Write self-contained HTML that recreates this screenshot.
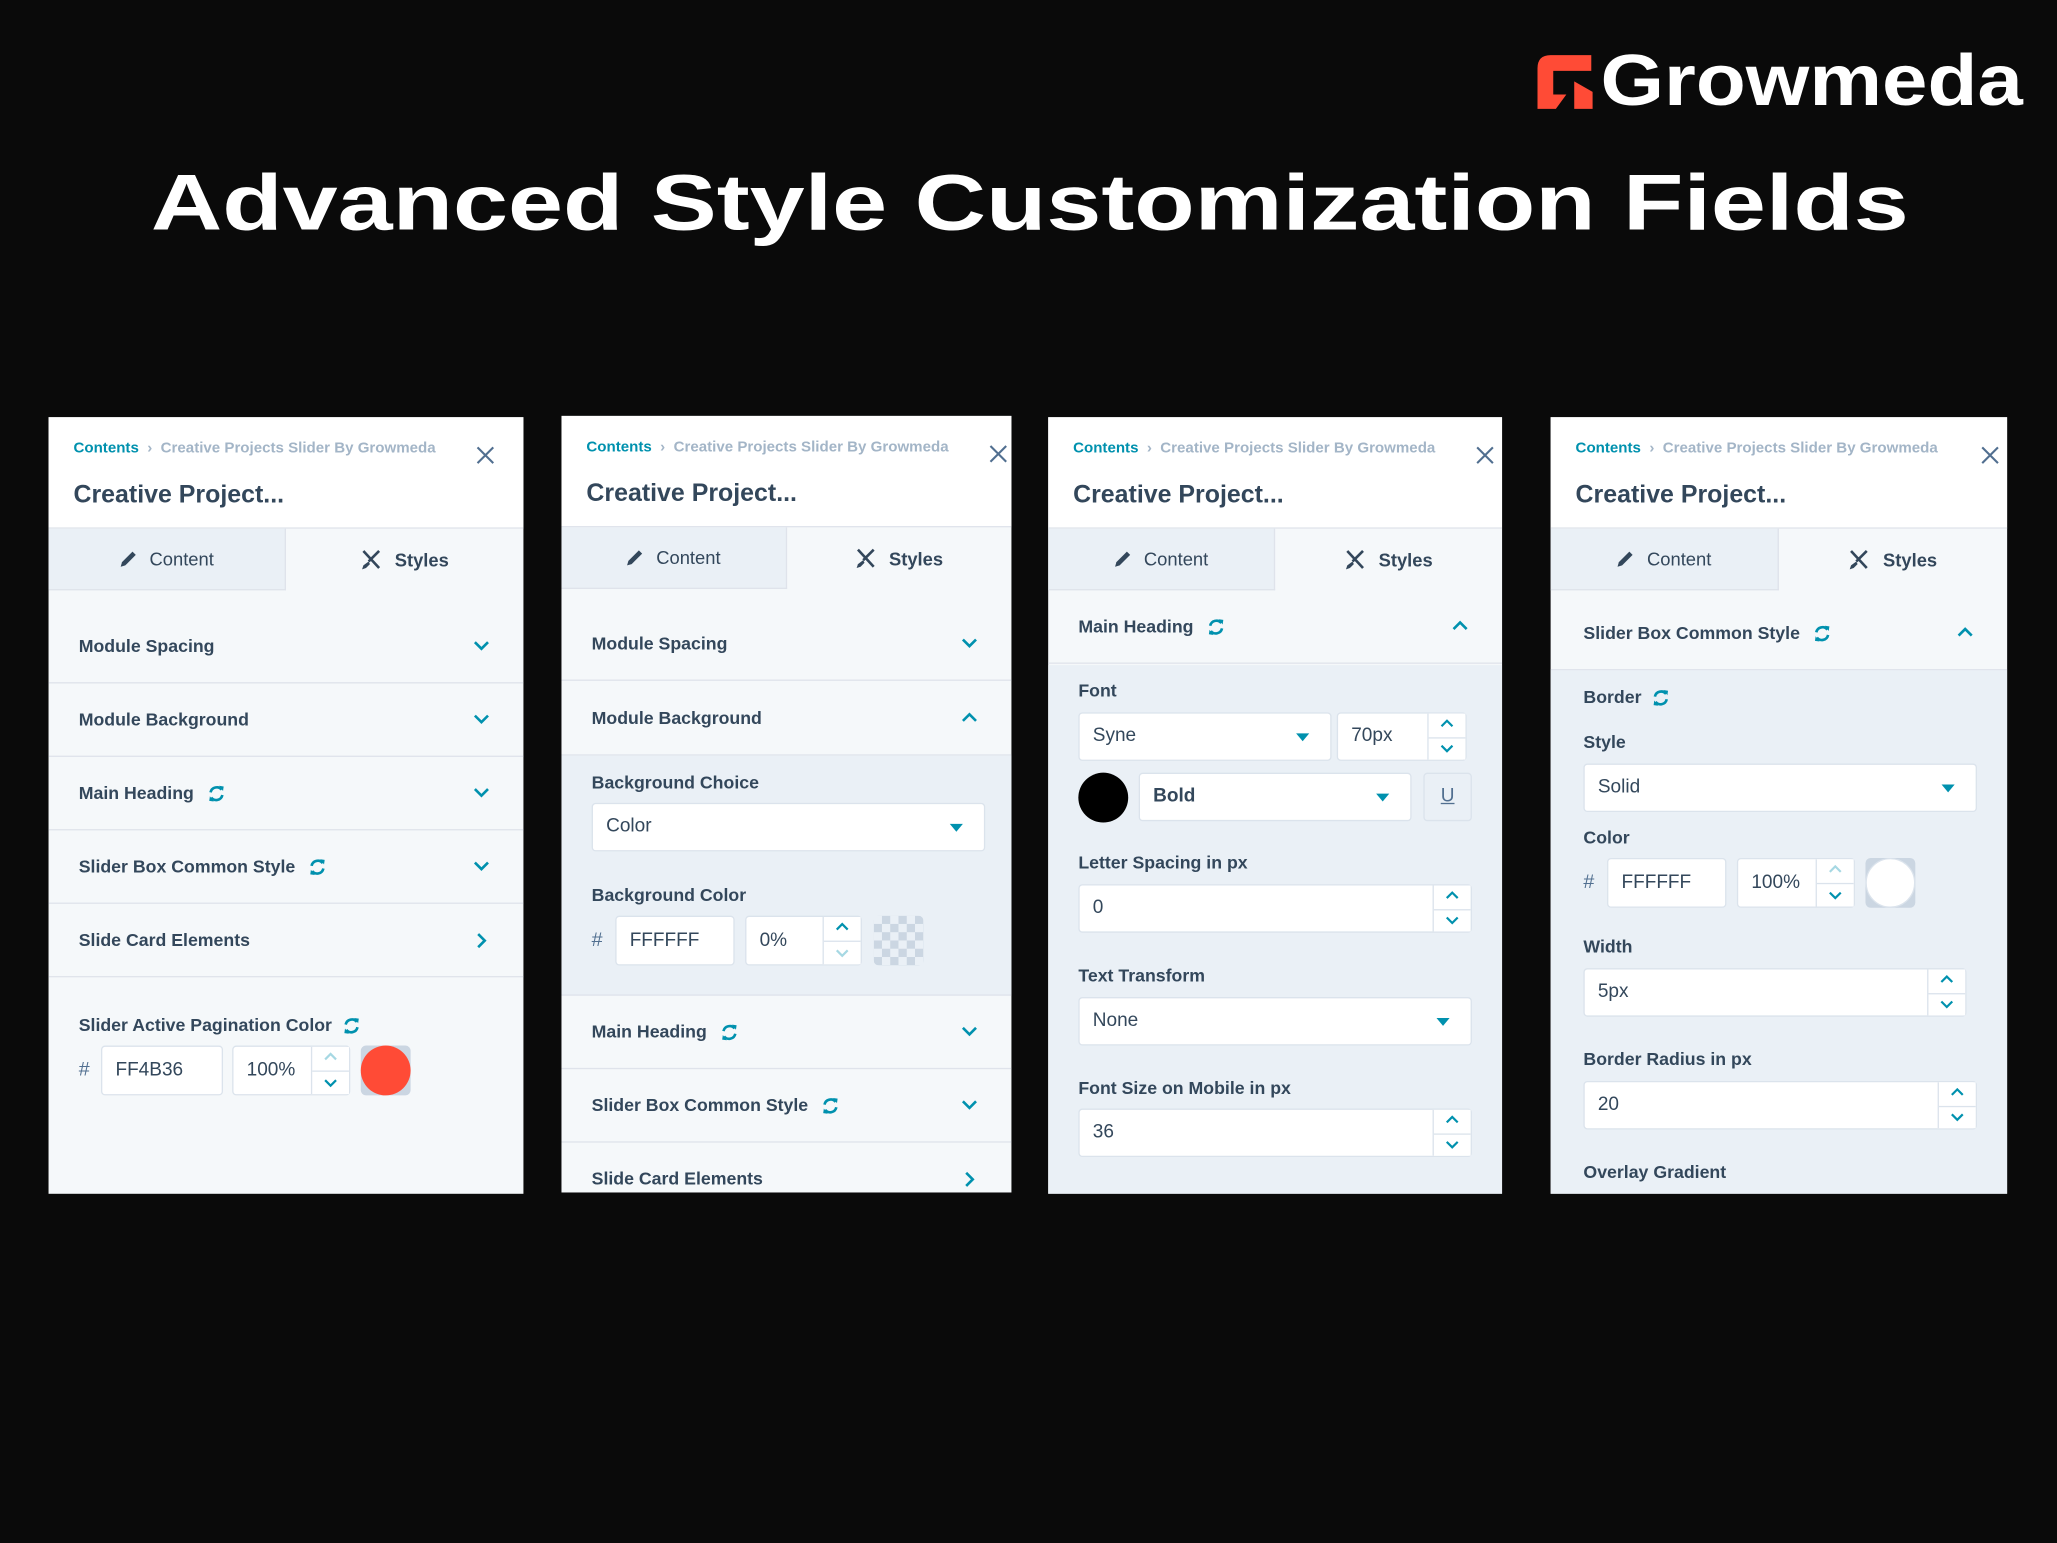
<!DOCTYPE html>
<html><head><meta charset="utf-8"><style>
*{margin:0;padding:0;box-sizing:border-box}
html,body{width:2057px;height:1543px;background:#0a0a0a;overflow:hidden}
#s{position:absolute;left:0;top:0;width:1568px;height:1176px;transform:scale(1.31186);transform-origin:0 0;font-family:"Liberation Sans",sans-serif;color:#33475b}
.pn{position:absolute;background:#f5f8fa;overflow:hidden}
.ab{position:absolute}
.hd{position:absolute;left:0;top:0;right:0;height:85px;background:#fff;border-bottom:1px solid #dfe3eb}
.bc{position:absolute;left:19px;top:18px;font-size:11.5px;font-weight:bold;color:#a3b5c7;white-space:nowrap}
.bc b{color:#0091ae}
.ti{position:absolute;left:19px;top:49px;font-size:19px;font-weight:bold;color:#33475b}
.x{position:absolute;top:22px;width:14px;height:14px}
.tabs{position:absolute;left:0;right:0;top:85px;height:47px}
.tc{position:absolute;left:0;top:0;width:50%;height:47px;background:#eaf0f6;border-right:1px solid #dfe3eb;border-bottom:1px solid #dfe3eb;font-size:14px;display:flex;align-items:center;justify-content:center;gap:9px;color:#33475b}
.ts{position:absolute;left:50%;right:0;top:0;height:47px;font-size:14px;font-weight:bold;display:flex;align-items:center;justify-content:center;gap:10px}
.row{position:absolute;left:0;right:0;height:56px;border-bottom:1px solid #dfe3eb;font-size:13.5px;font-weight:bold;line-height:56px;padding-left:23px;display:flex;align-items:center;gap:10px}
.row .cv{position:absolute;right:26px;top:23px}
.exp{position:absolute;left:0;right:0;background:#eaf0f6}
.lb{position:absolute;left:23px;font-size:13.5px;font-weight:bold;white-space:nowrap;display:flex;align-items:center;gap:8px}
.inp{position:absolute;height:37px;background:#fff;border:1px solid #dbe3ec;border-radius:3px;font-size:14.5px;line-height:35px;padding-left:10px;color:#33475b}
.sp{position:absolute;right:0;top:0;bottom:0;width:29px;border-left:1px solid #dbe3ec;background:#fff}
.sp:after{content:"";position:absolute;left:0;right:0;top:50%;border-top:1px solid #dbe3ec}
.sp svg{position:absolute;left:9px}
.dd{position:absolute;right:16px;top:15px;width:0;height:0;border-left:5.5px solid transparent;border-right:5.5px solid transparent;border-top:6px solid #0091ae}
.hash{position:absolute;font-size:15px;color:#516f90}
</style></head><body><div id="s">

<svg class="ab" style="left:0;top:0" width="1568" height="250">
<text x="115" y="175" font-family="Liberation Sans" font-weight="bold" font-size="60" fill="#fff" textLength="1340" lengthAdjust="spacingAndGlyphs">Advanced Style Customization Fields</text>
<path d="M1172 52 Q1172 42 1182 42 L1213 42 L1213 54 L1184 54 L1184 72 L1194 72 L1186 83 L1172 83Z" fill="#ff4b36"/>
<path d="M1200 62 L1214 70 L1214 83 L1200 83Z" fill="#ff4b36"/>
<text x="1220" y="80" font-family="Liberation Sans" font-weight="bold" font-size="55" fill="#fff" textLength="322" lengthAdjust="spacingAndGlyphs">Growmeda</text>
</svg>

<svg width="0" height="0" style="position:absolute"><defs>
<symbol id="dn" viewBox="0 0 12 8"><polyline points="1,1.5 6,6.5 11,1.5" fill="none" stroke="#0091ae" stroke-width="2"/></symbol>
<symbol id="up" viewBox="0 0 12 8"><polyline points="1,6.5 6,1.5 11,6.5" fill="none" stroke="#0091ae" stroke-width="2"/></symbol>
<symbol id="rt" viewBox="0 0 8 12"><polyline points="1.5,1 6.5,6 1.5,11" fill="none" stroke="#0091ae" stroke-width="2"/></symbol>
<symbol id="rf" viewBox="0 0 14 14"><path d="M2.5 6 A4.8 4.8 0 0 1 11 4" fill="none" stroke="#0091ae" stroke-width="2"/><path d="M11.5 8 A4.8 4.8 0 0 1 3 10" fill="none" stroke="#0091ae" stroke-width="2"/><path d="M9 1 L12.5 1.5 L12 5Z M5 13 L1.5 12.5 L2 9Z" fill="#0091ae"/></symbol>
<symbol id="xx" viewBox="0 0 14 14"><path d="M1 1 L13 13 M13 1 L1 13" stroke="#516f90" stroke-width="1.6"/></symbol>
<symbol id="pen" viewBox="0 0 14 14"><path d="M1 13 L2 9.5 L10 1.5 L12.5 4 L4.5 12Z" fill="#33475b"/></symbol>
<symbol id="br" viewBox="0 0 16 16"><path d="M2 1 L14 14 M14 1 L6 9" stroke="#33475b" stroke-width="2"/><path d="M6 9 L2 12 L1 15 L4 14 L7 11Z" fill="#33475b"/></symbol>
</defs></svg>

<!-- Panel 1 -->
<div class="pn" style="left:37px;top:318px;width:362px;height:592px">
<div class="hd"></div>
<div class="bc"><b>Contents</b> &nbsp;›&nbsp; Creative Projects Slider By Growmeda</div>
<svg class="x" style="left:326px"><use href="#xx"/></svg>
<div class="ti">Creative Project...</div>
<div class="tabs"><div class="tc"><svg width="14" height="14"><use href="#pen"/></svg>Content</div><div class="ts"><svg width="16" height="16"><use href="#br"/></svg>Styles</div></div>
<div class="row" style="top:147px">Module Spacing<svg class="cv" width="12" height="8"><use href="#dn"/></svg></div>
<div class="row" style="top:203px">Module Background<svg class="cv" width="12" height="8"><use href="#dn"/></svg></div>
<div class="row" style="top:259px">Main Heading <svg width="14" height="14"><use href="#rf"/></svg><svg class="cv" width="12" height="8"><use href="#dn"/></svg></div>
<div class="row" style="top:315px">Slider Box Common Style <svg width="14" height="14"><use href="#rf"/></svg><svg class="cv" width="12" height="8"><use href="#dn"/></svg></div>
<div class="row" style="top:371px">Slide Card Elements<svg class="cv" style="top:22px;right:28px" width="8" height="12"><use href="#rt"/></svg></div>
<div class="lb" style="top:456px">Slider Active Pagination Color <svg width="14" height="14"><use href="#rf"/></svg></div>
<div class="hash" style="left:23px;top:489px">#</div>
<div class="inp" style="left:40px;top:479px;width:93px;height:38px;line-height:36px">FF4B36</div>
<div class="inp" style="left:140px;top:479px;width:90px;height:38px;line-height:36px">100%<div class="sp"><svg style="top:4px" width="10" height="7"><use href="#up" style="opacity:.35"/></svg><svg style="top:24px" width="10" height="7"><use href="#dn"/></svg></div></div>
<div class="ab" style="left:238px;top:479px;width:38px;height:38px;background:#cbd6e2;border-radius:4px"></div>
<div class="ab" style="left:238px;top:479px;width:38px;height:38px;background:#ff4b36;border-radius:50%"></div>
</div>

<!-- Panel 2 -->
<div class="pn" style="left:428px;top:317px;width:343px;height:592px">
<div class="hd"></div>
<div class="bc"><b>Contents</b> &nbsp;›&nbsp; Creative Projects Slider By Growmeda</div>
<svg class="x" style="left:326px"><use href="#xx"/></svg>
<div class="ti">Creative Project...</div>
<div class="tabs"><div class="tc"><svg width="14" height="14"><use href="#pen"/></svg>Content</div><div class="ts"><svg width="16" height="16"><use href="#br"/></svg>Styles</div></div>
<div class="row" style="top:146px">Module Spacing<svg class="cv" width="12" height="8"><use href="#dn"/></svg></div>
<div class="row" style="top:203px">Module Background<svg class="cv" width="12" height="8"><use href="#up"/></svg></div>
<div class="exp" style="top:259px;height:183px;border-bottom:1px solid #dfe3eb"></div>
<div class="lb" style="top:272px">Background Choice</div>
<div class="inp" style="left:23px;top:295px;width:300px">Color<div class="dd"></div></div>
<div class="lb" style="top:358px">Background Color</div>
<div class="hash" style="left:23px;top:391px">#</div>
<div class="inp" style="left:41px;top:381px;width:91px;height:38px;line-height:36px">FFFFFF</div>
<div class="inp" style="left:140px;top:381px;width:89px;height:38px;line-height:36px">0%<div class="sp"><svg style="top:4px" width="10" height="7"><use href="#up"/></svg><svg style="top:24px" width="10" height="7"><use href="#dn" style="opacity:.35"/></svg></div></div>
<div class="ab" style="left:238px;top:381px;width:38px;height:38px;border-radius:4px;background:repeating-conic-gradient(#cbd6e2 0 25%,#eaf0f6 0 50%) 0 0/12.6px 12.6px"></div>
<div class="row" style="top:442px">Main Heading <svg width="14" height="14"><use href="#rf"/></svg><svg class="cv" width="12" height="8"><use href="#dn"/></svg></div>
<div class="row" style="top:498px">Slider Box Common Style <svg width="14" height="14"><use href="#rf"/></svg><svg class="cv" width="12" height="8"><use href="#dn"/></svg></div>
<div class="row" style="top:554px">Slide Card Elements<svg class="cv" style="top:22px;right:28px" width="8" height="12"><use href="#rt"/></svg></div>
</div>

<!-- Panel 3 -->
<div class="pn" style="left:799px;top:318px;width:346px;height:592px">
<div class="hd"></div>
<div class="bc"><b>Contents</b> &nbsp;›&nbsp; Creative Projects Slider By Growmeda</div>
<svg class="x" style="left:326px"><use href="#xx"/></svg>
<div class="ti">Creative Project...</div>
<div class="tabs"><div class="tc"><svg width="14" height="14"><use href="#pen"/></svg>Content</div><div class="ts"><svg width="16" height="16"><use href="#br"/></svg>Styles</div></div>
<div class="row" style="top:132px">Main Heading <svg width="14" height="14"><use href="#rf"/></svg><svg class="cv" width="12" height="8"><use href="#up"/></svg></div>
<div class="exp" style="top:189px;bottom:0"></div>
<div class="lb" style="top:201px">Font</div>
<div class="inp" style="left:23px;top:225px;width:193px">Syne<div class="dd"></div></div>
<div class="inp" style="left:220px;top:225px;width:99px">70px<div class="sp"><svg style="top:4px" width="10" height="7"><use href="#up"/></svg><svg style="top:23px" width="10" height="7"><use href="#dn"/></svg></div></div>
<div class="ab" style="left:23px;top:271px;width:38px;height:38px;border-radius:50%;background:#000"></div>
<div class="inp" style="left:69px;top:271px;width:208px;font-weight:bold">Bold<div class="dd"></div></div>
<div class="inp" style="left:286px;top:271px;width:37px;background:#eaf0f6;text-align:center;padding:0;text-decoration:underline;color:#516f90">U</div>
<div class="lb" style="top:332px">Letter Spacing in px</div>
<div class="inp" style="left:23px;top:356px;width:300px">0<div class="sp"><svg style="top:4px" width="10" height="7"><use href="#up"/></svg><svg style="top:23px" width="10" height="7"><use href="#dn"/></svg></div></div>
<div class="lb" style="top:418px">Text Transform</div>
<div class="inp" style="left:23px;top:442px;width:300px">None<div class="dd"></div></div>
<div class="lb" style="top:504px">Font Size on Mobile in px</div>
<div class="inp" style="left:23px;top:527px;width:300px">36<div class="sp"><svg style="top:4px" width="10" height="7"><use href="#up"/></svg><svg style="top:23px" width="10" height="7"><use href="#dn"/></svg></div></div>
</div>

<!-- Panel 4 -->
<div class="pn" style="left:1182px;top:318px;width:348px;height:592px">
<div class="hd"></div>
<div class="bc"><b>Contents</b> &nbsp;›&nbsp; Creative Projects Slider By Growmeda</div>
<svg class="x" style="left:328px"><use href="#xx"/></svg>
<div class="ti">Creative Project...</div>
<div class="tabs"><div class="tc"><svg width="14" height="14"><use href="#pen"/></svg>Content</div><div class="ts"><svg width="16" height="16"><use href="#br"/></svg>Styles</div></div>
<div class="row" style="top:137px;padding-left:25px">Slider Box Common Style <svg width="14" height="14"><use href="#rf"/></svg><svg class="cv" width="12" height="8"><use href="#up"/></svg></div>
<div class="exp" style="top:193px;bottom:0"></div>
<div class="lb" style="top:206px;left:25px">Border <svg width="14" height="14"><use href="#rf"/></svg></div>
<div class="lb" style="top:240px;left:25px">Style</div>
<div class="inp" style="left:25px;top:264px;width:300px">Solid<div class="dd"></div></div>
<div class="lb" style="top:313px;left:25px">Color</div>
<div class="hash" style="left:25px;top:346px">#</div>
<div class="inp" style="left:43px;top:336px;width:91px;height:38px;line-height:36px">FFFFFF</div>
<div class="inp" style="left:142px;top:336px;width:90px;height:38px;line-height:36px">100%<div class="sp"><svg style="top:4px" width="10" height="7"><use href="#up" style="opacity:.35"/></svg><svg style="top:24px" width="10" height="7"><use href="#dn"/></svg></div></div>
<div class="ab" style="left:240px;top:336px;width:38px;height:38px;background:#cbd6e2;border-radius:4px"></div>
<div class="ab" style="left:240px;top:336px;width:38px;height:38px;background:#fff;border-radius:50%;border:1px solid #dbe3ec"></div>
<div class="lb" style="top:396px;left:25px">Width</div>
<div class="inp" style="left:25px;top:420px;width:292px">5px<div class="sp"><svg style="top:4px" width="10" height="7"><use href="#up"/></svg><svg style="top:23px" width="10" height="7"><use href="#dn"/></svg></div></div>
<div class="lb" style="top:482px;left:25px">Border Radius in px</div>
<div class="inp" style="left:25px;top:506px;width:300px">20<div class="sp"><svg style="top:4px" width="10" height="7"><use href="#up"/></svg><svg style="top:23px" width="10" height="7"><use href="#dn"/></svg></div></div>
<div class="lb" style="top:568px;left:25px">Overlay Gradient</div>
</div>

</div></body></html>
